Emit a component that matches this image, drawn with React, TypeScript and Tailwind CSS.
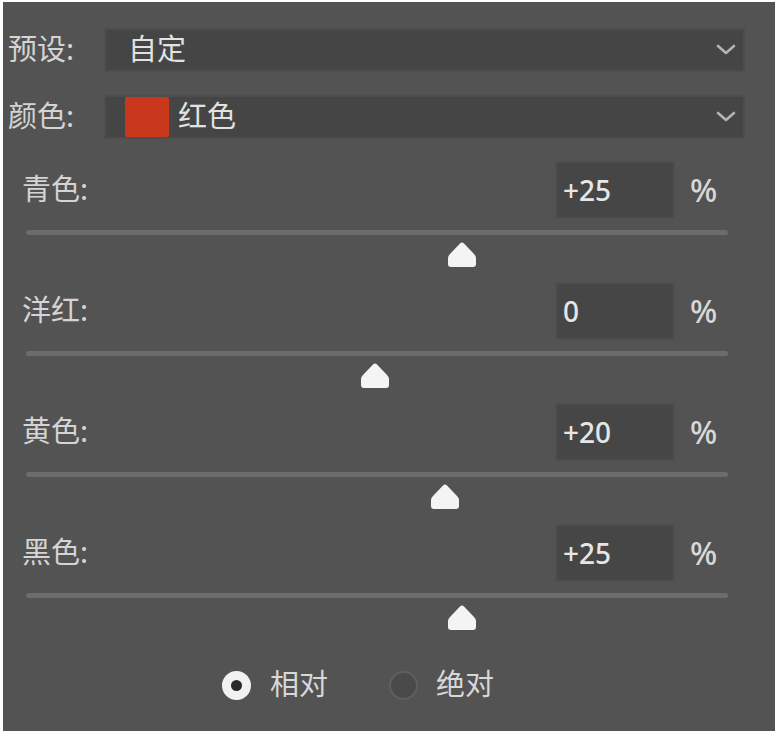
const font = "font-['Noto_Sans_CJK_SC','Noto_Sans',sans-serif]";

const channels = [
  { label: "青色:", value: 25 },
  { label: "洋红:", value: 0 },
  { label: "黄色:", value: 20 },
  { label: "黑色:", value: 25 },
];

function fmt(v: number) {
  return v > 0 ? `+${v}` : `${v}`;
}

function Chevron() {
  return (
    <svg width="22" height="14" viewBox="0 0 22 14" className="mr-[6px]">
      <path d="M3 3 L11 10 L19 3" fill="none" stroke="#b4b4b4" strokeWidth="2.6" strokeLinecap="round" strokeLinejoin="round" />
    </svg>
  );
}

function Thumb() {
  return (
    <svg width="28" height="25" viewBox="0 0 28 25">
      <path
        d="M12 1.5 Q14 -0.5 16 1.5 L26 12 Q28 14 28 16 L28 22 Q28 25 25 25 L3 25 Q0 25 0 22 L0 16 Q0 14 2 12 Z"
        fill="#f4f4f4"
      />
    </svg>
  );
}

function Dropdown({ label, children }: { label: string; children: React.ReactNode }) {
  return (
    <div className="flex h-[40px] items-center">
      <div className="w-[103px] pb-[6px] pl-[5px] text-[29px] leading-none text-[#d4d4d4]">{label}</div>
      <div className="flex h-[40px] w-[637px] items-center justify-between bg-[#454545] shadow-[0_0_0_2px_#4d4d4d]">
        <div className="flex items-center">{children}</div>
        <Chevron />
      </div>
    </div>
  );
}

function Channel({ label, value }: { label: string; value: number }) {
  const center = 375 + value * 3.48;
  return (
    <div className="flex flex-col">
      <div className="flex h-[54px] items-center">
        <div className="w-[554px] pb-[5px] pl-[19px] text-[29px] leading-none text-[#d4d4d4]">{label}</div>
        <div className="flex h-[54px] w-[116px] items-center bg-[#464646] pl-[6px] text-[28px] font-medium text-[#e6e6e6] shadow-[0_0_0_2px_#4e4e4e] font-['Noto_Sans',sans-serif]">
          {fmt(value)}
        </div>
        <div className="ml-[17px] text-[32px] font-medium leading-none text-[#d8d8d8] font-['Noto_Sans',sans-serif]">%</div>
      </div>
      <div className="ml-[23px] mt-[13px] h-[5px] w-[702px] rounded-full bg-[#6c6c6c]" />
      <div className="mt-[7px] flex h-[25px]">
        <div style={{ width: center - 14 - 3 }} />
        <Thumb />
      </div>
    </div>
  );
}

export default function App() {
  return (
    <div className={`min-h-[736px] w-[783px] bg-white pl-[3px] pt-[2px] ${font}`}>
      <div className="flex h-[729px] w-[772px] flex-col bg-[#535353] pt-[28px]">
        <Dropdown label="预设:">
          <span className="ml-[22px] pb-[6px] text-[29px] leading-none text-[#e2e2e2]">自定</span>
        </Dropdown>
        <div className="mt-[27px]">
          <Dropdown label="颜色:">
            <span className="ml-[19px] h-[40px] w-[44px] rounded-[2px] bg-[#c9381c]" />
            <span className="ml-[9px] pb-[6px] text-[29px] leading-none text-[#e2e2e2]">红色</span>
          </Dropdown>
        </div>
        <div className="mt-[26px] flex flex-col gap-[17px]">
          {channels.map((c) => (
            <Channel key={c.label} label={c.label} value={c.value} />
          ))}
        </div>
        <div className="mt-[38px] flex items-center pl-[219px]">
          <span className="flex h-[29px] w-[29px] items-center justify-center rounded-full bg-[#f2f2f2]">
            <span className="h-[11px] w-[11px] rounded-full bg-[#2a2a2a]" />
          </span>
          <span className="ml-[19px] pb-[5px] text-[29px] leading-none text-[#d8d8d8]">相对</span>
          <span className="ml-[61px] h-[29px] w-[29px] rounded-full border-2 border-[#5f5f5f] bg-[#4a4a4a]" />
          <span className="ml-[18px] pb-[5px] text-[29px] leading-none text-[#d8d8d8]">绝对</span>
        </div>
      </div>
    </div>
  );
}
